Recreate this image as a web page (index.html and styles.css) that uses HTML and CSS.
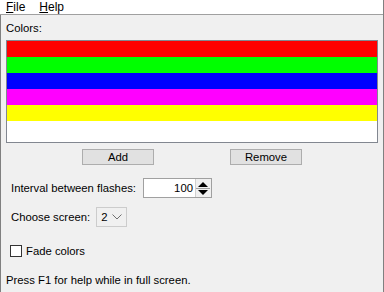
FILE: index.html
```html
<!DOCTYPE html>
<html>
<head>
<meta charset="utf-8">
<link rel="stylesheet" href="styles.css">
</head>
<body>
<div class="window">
  <div class="menubar">
    <span class="menu"><u>F</u>ile</span>
    <span class="menu"><u>H</u>elp</span>
  </div>
  <div class="content">
    <div class="label-colors">Colors:</div>
    <div class="list">
      <div class="stripe red"></div>
      <div class="stripe green"></div>
      <div class="stripe blue"></div>
      <div class="stripe magenta"></div>
      <div class="stripe yellow"></div>
      <div class="stripe white"></div>
    </div>
    <div class="buttons">
      <button class="btn">Add</button>
      <button class="btn">Remove</button>
    </div>
    <div class="row row-interval">
      <span class="lbl">Interval between flashes:</span>
      <div class="spinner">
        <span class="spin-value">100</span>
        <div class="spin-arrows">
          <svg width="14" height="17" viewBox="0 0 14 17">
            <path d="M2 7 L7 2 L12 7 Z" fill="#000"/>
            <line x1="0" y1="8.5" x2="14" y2="8.5" stroke="#a0a0a0" stroke-width="1"/>
            <path d="M2 10 L7 15 L12 10 Z" fill="#000"/>
          </svg>
        </div>
      </div>
    </div>
    <div class="row row-screen">
      <span class="lbl">Choose screen:</span>
      <div class="combo">
        <span class="combo-value">2</span>
        <svg class="chev" width="10" height="6" viewBox="0 0 10 6">
          <path d="M0.5 0.5 L5 5 L9.5 0.5" fill="none" stroke="#707070" stroke-width="1"/>
        </svg>
      </div>
    </div>
    <div class="row row-fade">
      <span class="checkbox"></span>
      <span class="lbl">Fade colors</span>
    </div>
    <div class="hint">Press F1 for help while in full screen.</div>
  </div>
</div>
</body>
</html>
```

FILE: styles.css
```css
html, body {
  margin: 0;
  padding: 0;
  background: #f0f0f0;
}
.window {
  width: 384px;
  height: 292px;
  box-sizing: border-box;
  border-right: 1px solid #808080;
  font-family: "Liberation Sans", Arial, sans-serif;
  font-size: 11.3px;
  color: #000;
  overflow: hidden;
  display: flex;
  flex-direction: column;
}
.menubar {
  height: 14px;
  background: #fff;
  border-bottom: 1px solid #a0a0a0;
  display: flex;
  align-items: center;
  padding-left: 6px;
  gap: 14px;
  line-height: 14px;
  font-size: 12px;
}
.menu u {
  text-decoration: underline;
  text-underline-offset: 1px;
}
.content {
  flex: 1;
  border-left: 1px solid #808080;
  padding: 0 5px 0 5px;
  display: flex;
  flex-direction: column;
}
.label-colors {
  margin-top: 6px;
  height: 14px;
  line-height: 14px;
}
.list {
  margin-top: 5px;
  height: 101px;
  border: 1px solid #828790;
  background: #fff;
  display: flex;
  flex-direction: column;
  width: 370px;
}
.stripe { height: 16px; }
.red { background: #ff0000; }
.green { background: #00ff00; }
.blue { background: #0000ff; }
.magenta { background: #ff00ff; }
.yellow { background: #ffff00; }
.white { background: #fff; }
.buttons {
  margin-top: 6px;
  display: flex;
  gap: 76px;
  padding-left: 76px;
}
.btn {
  width: 72px;
  height: 16px;
  padding: 0;
  margin: 0;
  background: #e1e1e1;
  border: 1px solid #adadad;
  font-family: inherit;
  font-size: 11.3px;
  line-height: 14px;
  color: #000;
}
.row {
  display: flex;
  align-items: center;
  padding-left: 5px;
}
.row-interval {
  margin-top: 13px;
  height: 20px;
}
.lbl { line-height: 14px; }
.spinner {
  margin-left: 7px;
  width: 69px;
  height: 20px;
  box-sizing: border-box;
  border: 1px solid #a0a0a0;
  background: #fff;
  display: flex;
  align-items: center;
}
.spin-value {
  flex: 1;
  text-align: right;
  padding-right: 2px;
}
.spin-arrows {
  width: 15px;
  height: 18px;
  background: #f0f0f0;
  border-left: 1px solid #d0d0d0;
  display: flex;
  align-items: center;
  justify-content: center;
}
.spin-arrows svg { display: block; }
.row-screen {
  margin-top: 9px;
  height: 20px;
}
.combo {
  margin-left: 6px;
  width: 31px;
  height: 20px;
  box-sizing: border-box;
  border: 1px solid #cccccc;
  background: #f0f0f0;
  display: flex;
  align-items: center;
  padding-left: 4px;
  gap: 5px;
}
.chev { display: block; }
.row-fade {
  margin-top: 17px;
  height: 14px;
  padding-left: 4px;
}
.checkbox {
  width: 12px;
  height: 12px;
  box-sizing: border-box;
  border: 1px solid #333;
  background: #fff;
  margin-right: 4px;
}
.hint {
  margin-top: 15px;
  line-height: 14px;
}
```
